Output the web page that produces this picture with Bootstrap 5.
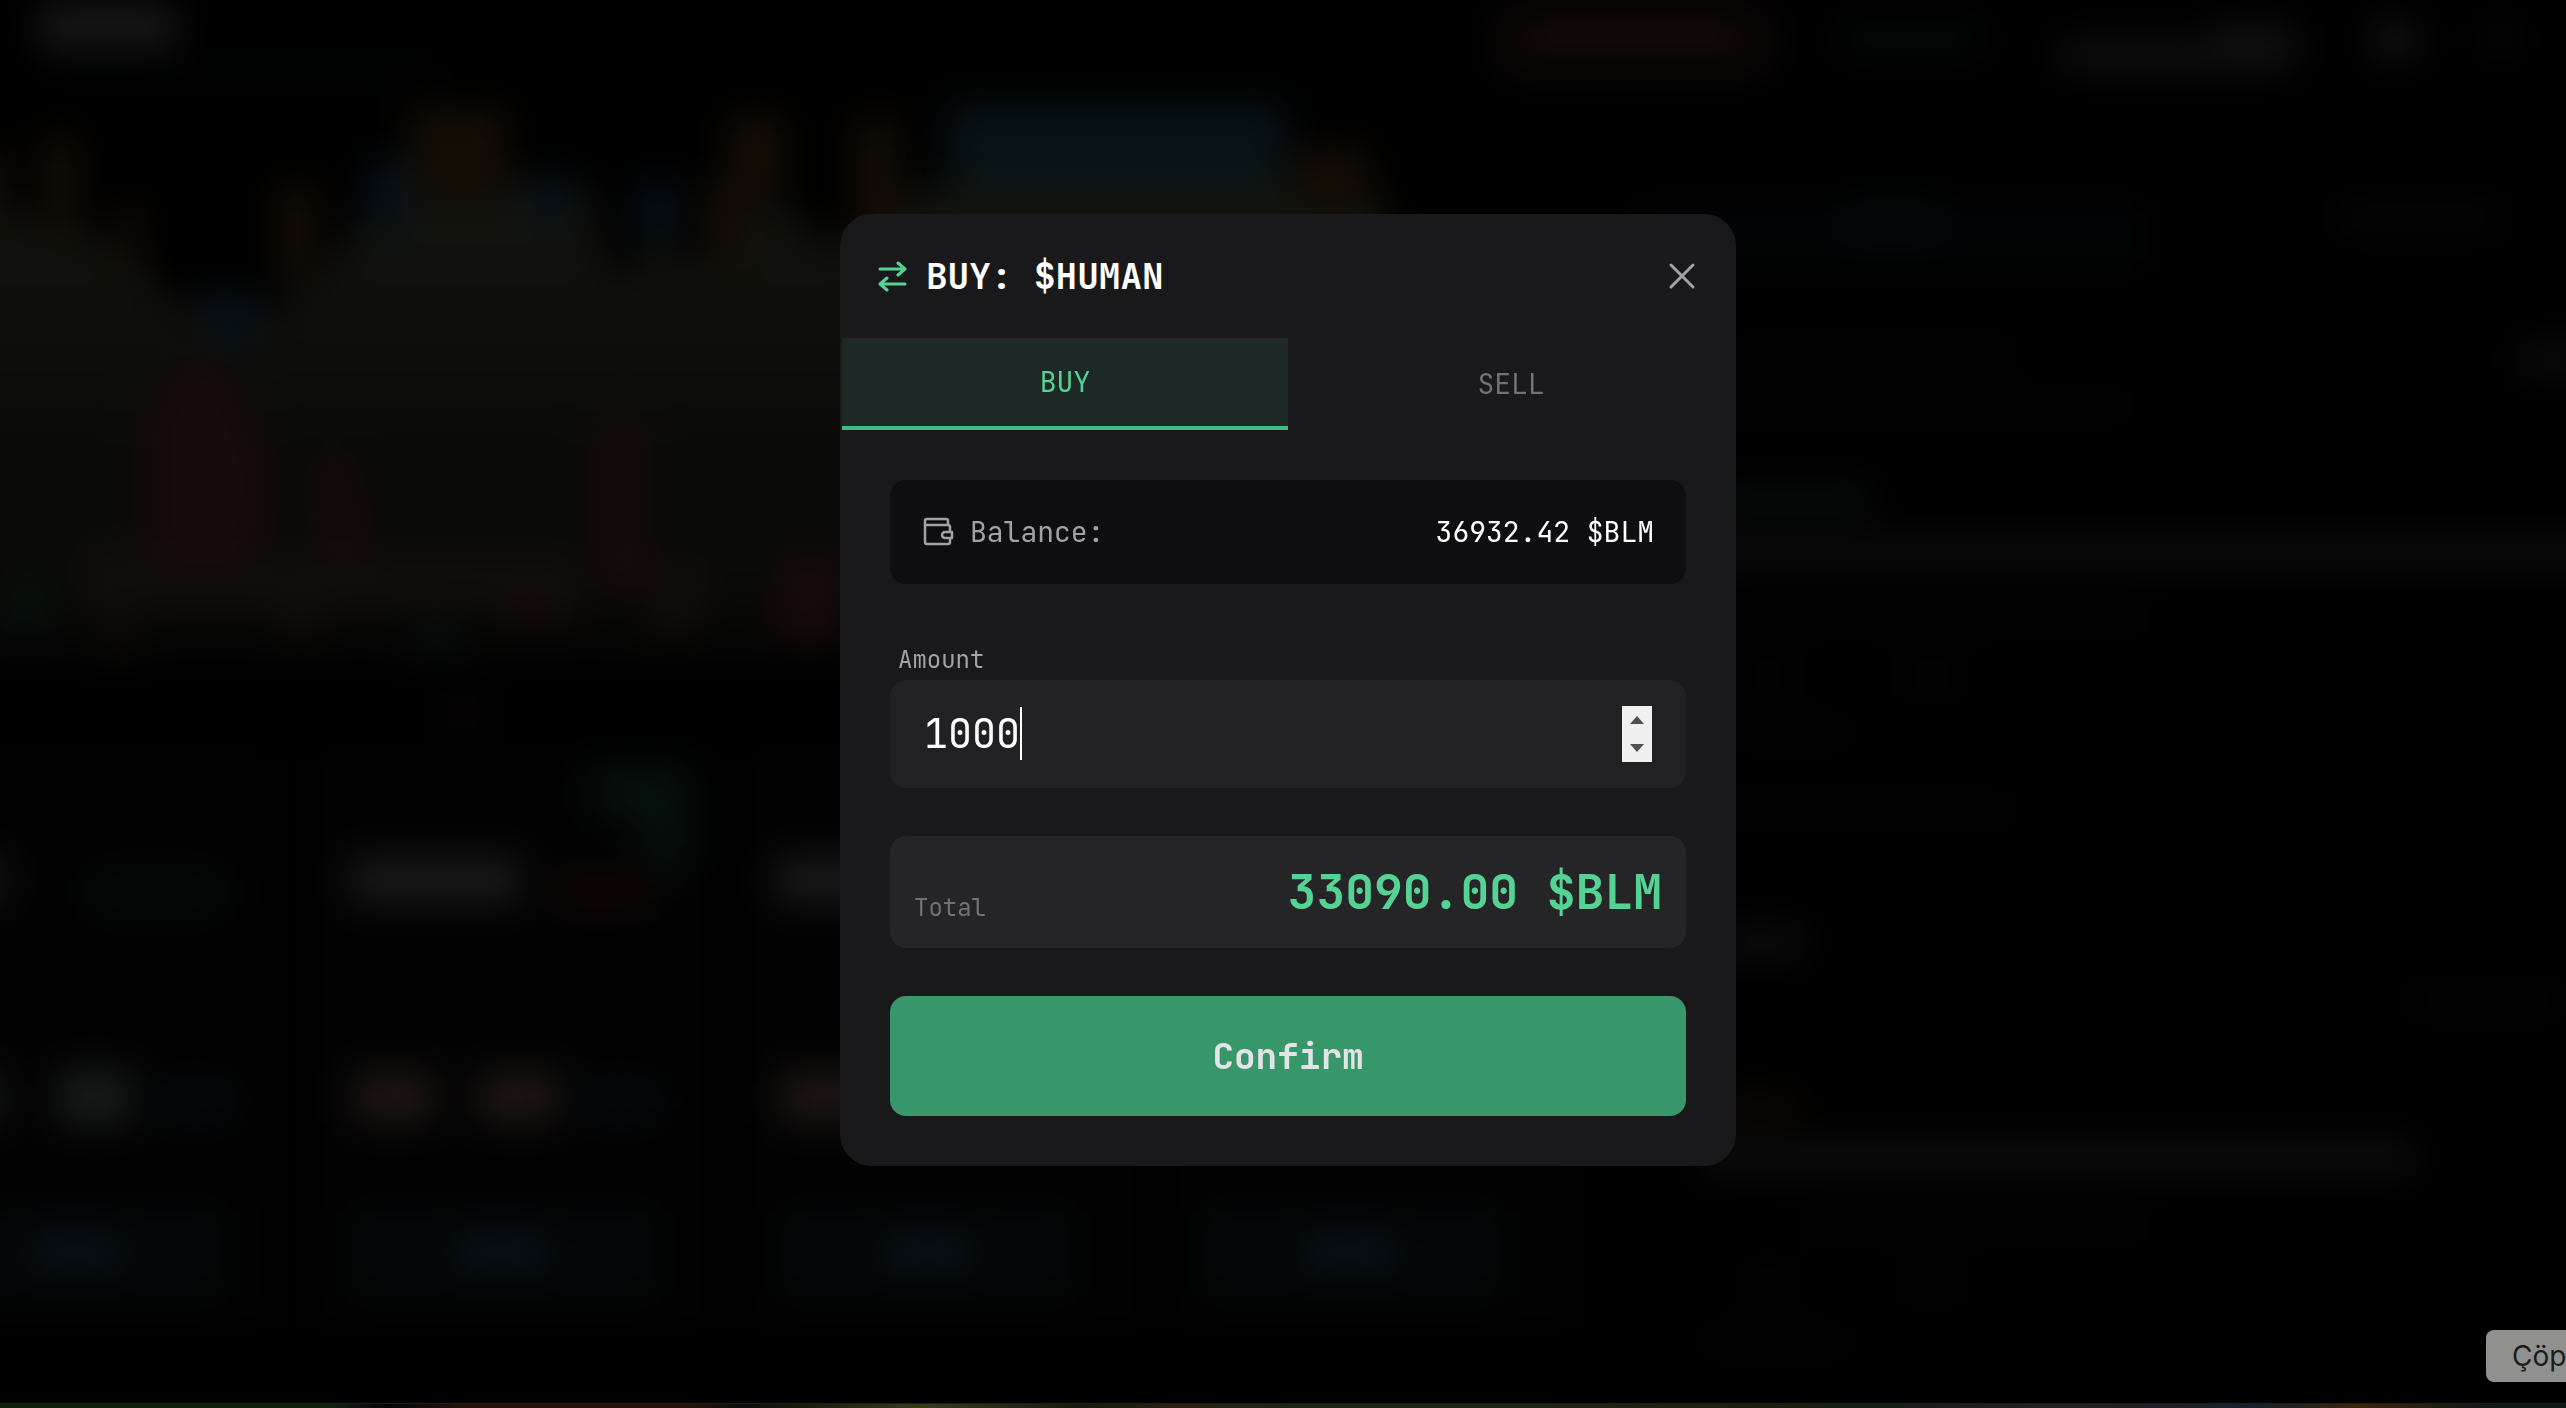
<!DOCTYPE html>
<html lang="en" data-bs-theme="dark">
<head>
<meta charset="utf-8">
<meta name="viewport" content="width=device-width, initial-scale=1">
<title>BUY: $HUMAN</title>
<link href="https://cdn.jsdelivr.net/npm/bootstrap@5.3.0/dist/css/bootstrap.min.css" rel="stylesheet">
<style>
  :root {
    --green: #55d394;
    --line: #44bc81;
    --muted: #a1a1aa;
    --faint: #71717a;
  }
  body {
    background: #000;
    color: #fff;
    font-family: "JetBrains Mono", "DejaVu Sans Mono", monospace;
    font-size: 28px;
    line-height: 40px;
    overflow: hidden;
  }
  .scene { z-index: 0; }
  .trade-modal {
    --bs-modal-width: 896px;
    padding: 0 0 28px 10px;
  }
  .trade-modal .modal-content {
    background: #19191b;
    border: 2px solid #19191b;
    border-radius: 32px;
    color: #fff;
  }
  .trade-head { padding: 32px 32px 34px 34px; height: 122px; }
  .head-group { gap: 18px; }
  .trade-title { font-size: 36px; line-height: 56px; font-weight: 600; }
  .icon-box { width: 32px; height: 32px; flex: none; }
  .close-btn { background: none; border: 0; padding: 4px; line-height: 0; color: var(--muted); }
  .trade-tabs { border-bottom: 2px solid transparent; }
  .trade-tabs .nav-link {
    height: 92px;
    border: 0;
    border-radius: 0;
    padding: 0;
    background: none;
    color: var(--faint);
  }
  .trade-tabs .nav-link.active {
    background: #1e2827;
    color: var(--green);
    border-bottom: 4px solid var(--line);
  }
  .trade-body { padding: 48px; gap: 48px; }
  .balance-box { background: #0e0e10; border-radius: 16px; padding: 32px; }
  .balance-name { color: var(--muted); }
  .amount-label { color: var(--muted); font-size: 24px; line-height: 40px; padding: 8px 8px 0; }
  .amount-box { background: #212123; border-radius: 16px; padding: 24px 34px; height: 108px; }
  .amount-box input {
    background: none;
    border: 0;
    outline: 0;
    padding: 0;
    color: #fff;
    caret-color: transparent;
    font-size: 40px;
    line-height: 60px;
    appearance: textfield;
  }
  .amount-box input::-webkit-inner-spin-button { display: none; }
  .amount-field { font-size: 40px; }
  .caret { left: 4ch; top: 3px; width: 2px; height: 53px; background: #fff; }
  .spinner { width: 30px; background: #f0f0f0; }
  .spinner button { border: 0; padding: 0; height: 28px; background: none; line-height: 0; color: #505050; }
  .total-box { background: #252528; border-radius: 16px; padding: 24px; }
  .total-name { color: var(--faint); font-size: 24px; line-height: 32px; }
  .total-value { color: var(--green); font-size: 48px; line-height: 64px; font-weight: 600; }
  .confirm-btn {
    --bs-btn-bg: #37976a;
    --bs-btn-hover-bg: #37976a;
    --bs-btn-color: #e4e4e7;
    --bs-btn-border-color: transparent;
    --bs-btn-border-radius: 16px;
    --bs-btn-font-size: 36px;
    --bs-btn-font-weight: 600;
    height: 120px;
  }
  .dock-tip {
    z-index: 1060;
    right: 0;
    bottom: 26px;
    width: 80px;
    height: 52px;
    padding-left: 26px;
    border-radius: 8px 0 0 8px;
    background: #90908e;
    color: #1c1c1c;
    font-family: Inter, sans-serif;
    font-size: 28px;
    line-height: 52px;
    white-space: nowrap;
    overflow: hidden;
  }
  .wallpaper {
    height: 5px;
    border-top: 1px solid #1c1c1c;
    background: linear-gradient(90deg, #10200f 0 13%, #050505 15%, #24130b 18% 27%, #0c0c08 29%, #3a3a18 36%, #141a0e 42%, #2c2110 46%, #1b2612 50% 60%, #20200f 66%, #141f12 72%, #222 80%, #17202a 88%, #3a2408 92%, #101818 97%);
  }
</style>
</head>
<body>

<!-- Dimmed dashboard behind the dialog -->
<svg class="scene position-fixed top-0 start-0 w-100 h-100" viewBox="0 0 1568 860" preserveAspectRatio="xMidYMid slice" aria-hidden="true">
  <defs>
    <filter id="soft" x="-40" y="-40" width="1648" height="940" filterUnits="userSpaceOnUse" color-interpolation-filters="sRGB"><feGaussianBlur stdDeviation="11"/></filter>
    <linearGradient id="area" x1="0" y1="60" x2="0" y2="420" gradientUnits="userSpaceOnUse">
      <stop offset="0" stop-color="#14150f"/><stop offset=".3" stop-color="#10110c"/>
      <stop offset=".6" stop-color="#0a0a08"/><stop offset=".8" stop-color="#0a0a08"/><stop offset="1" stop-color="#010101"/>
    </linearGradient>
  </defs>
  <rect width="1568" height="860" fill="#000"/>
  <g filter="url(#soft)">
    <!-- header -->
    <rect x="24" y="2" width="84" height="28" fill="#161616"/>
    <rect x="30" y="36" width="240" height="14" fill="#010203"/>
    <rect x="910" y="0" width="176" height="50" rx="14" fill="#080404"/>
    <rect x="930" y="15" width="135" height="16" fill="#140b0a"/>
    <rect x="1122" y="12" width="90" height="22" rx="8" fill="#030705"/>
    <rect x="1258" y="25" width="144" height="18" fill="#0f0f0f"/>
    <rect x="1350" y="14" width="52" height="24" fill="#0f0f0f"/>
    <rect x="1450" y="12" width="26" height="24" fill="#111"/>
    <rect x="1518" y="14" width="18" height="18" fill="#090909"/>
    <!-- chart area -->
    <path fill="url(#area)" d="M-30 125 50 140 90 165 105 185 150 178 165 192 200 165 225 125 290 108 358 112 374 170 400 150 430 162 470 120 500 145 530 150 560 115 830 105 848 130 848 408H-30Z"/>
    <g fill="#130d05">
      <path d="M-30 92h34v40h-34zM26 82h22v60H26zM72 125h14v40H72zM170 112h24v60h-24zM250 66h60v56h-60zM445 70h34v50h-34zM430 110h28v50h-28zM522 72h28v80h-28zM790 90h46v40h-46z"/>
    </g>
    <g fill="#061118">
      <path d="M226 98h24v46h-24zM322 108h28v28h-28zM390 112h24v36h-24zM126 178h30v34h-30z"/>
      <path fill="#081317" d="M580 64H784v50H580z"/>
    </g>
    <g fill="#180b0b">
      <path d="M92 250l30-30 18 10 24 60-10 60H92zM194 280h18l12 80h-22zM370 255h20v85l30 20h-50zM302 340l20 10 30 30h-45zM482 340h30v50h-40z"/>
      <path fill="#110e0a" d="M60 330h20l-4 70h-10zM170 340h28v45h-28zM400 355l30-12v34l-30 16zM50 340h300l10 30H50z"/>
    </g>
    <path fill="#06110c" d="M4 355h26v30H4zM255 382h24v16h-24z"/>
    <path fill="#0a0605" d="M272 425h24v20h-24z"/>
    <!-- market cards -->
    <g fill="#020202">
      <rect x="-90" y="462" width="255" height="350"/><rect x="190" y="462" width="245" height="350"/>
      <rect x="455" y="462" width="245" height="350"/><rect x="715" y="462" width="245" height="350"/>
    </g>
    <g fill="#030607">
      <rect x="-60" y="740" width="196" height="52"/><rect x="216" y="740" width="184" height="52"/>
      <rect x="478" y="740" width="176" height="52"/><rect x="736" y="740" width="180" height="52"/>
    </g>
    <g fill="#081318">
      <rect x="20" y="755" width="54" height="20"/><rect x="280" y="755" width="54" height="20"/>
      <rect x="540" y="755" width="54" height="20"/><rect x="798" y="755" width="54" height="20"/>
    </g>
    <g fill="#191919">
      <rect x="-20" y="524" width="22" height="26"/><rect x="214" y="524" width="104" height="27"/><rect x="474" y="524" width="80" height="27"/>
    </g>
    <rect x="58" y="536" width="76" height="18" fill="#040b08"/>
    <rect x="340" y="536" width="58" height="18" fill="#130606"/>
    <path fill="#05100d" d="M362 468h58v64h-24l-4-28-28-10z"/>
    <path fill="#181b1a" d="M-20 654H0v32h-20zM36 654h44v32H36z"/>
    <path fill="#1b1513" d="M216 654h50v32h-50zM292 654h50v32h-50zM476 654h70v32h-70z"/>
    <path fill="#040c11" d="M98 665h42v16H98zM358 665h42v16h-42z"/>
    <!-- news panel -->
    <rect x="1000" y="122" width="312" height="44" fill="#020304"/>
    <rect x="1130" y="127" width="52" height="14" fill="#050c0d"/>
    <rect x="1428" y="127" width="100" height="12" fill="#080808"/>
    <path fill="#040404" d="M1060 211h170v10h-170zM1040 243h260v10h-260zM1060 372h250v10h-250zM1060 405h40v14h-40zM1158 405h44v14h-44zM1060 442h70v10h-70zM1040 490h190v10h-190zM1470 605h98v12h-98zM1100 743h210v10h-210zM1062 776h36v14h-36zM1160 776h40v14h-40zM1040 814h90v10h-90z"/>
    <rect x="1540" y="210" width="40" height="18" fill="#0d0d0d"/>
    <rect x="1050" y="296" width="92" height="18" fill="#050c08"/>
    <rect x="1030" y="328" width="560" height="18" fill="#0c0c0c"/>
    <rect x="1050" y="566" width="52" height="20" fill="#0c0c0c"/>
    <rect x="1050" y="668" width="48" height="16" fill="#0c0903"/>
    <rect x="1040" y="697" width="434" height="20" fill="#0d0d0d"/>
  </g>
</svg>

<main class="modal trade-modal show d-block" tabindex="-1" role="dialog" aria-labelledby="tradeTitle">
  <div class="modal-dialog modal-dialog-centered">
    <div class="modal-content">
      <header class="trade-head d-flex align-items-center justify-content-between">
        <div class="head-group d-flex align-items-center">
          <svg class="icon-box" viewBox="0 0 32 32" fill="none" stroke="#55d394" stroke-width="3" stroke-linecap="round" stroke-linejoin="round" aria-hidden="true">
            <path d="M4 9H29M22 3l7 6-7 6M29 24H4M11 18l-7 6 7 6"/>
          </svg>
          <h1 class="trade-title mb-0" id="tradeTitle">BUY: $HUMAN</h1>
        </div>
        <button class="close-btn" type="button" aria-label="Close">
          <svg width="32" height="32" viewBox="0 0 32 32" fill="none" stroke="currentColor" stroke-width="3" stroke-linecap="round" aria-hidden="true"><path d="M5 5l22 22M27 5L5 27"/></svg>
        </button>
      </header>

      <div class="nav nav-justified trade-tabs" role="tablist">
        <button class="nav-link nav-item active" type="button" role="tab" aria-selected="true">BUY</button>
        <button class="nav-link nav-item" type="button" role="tab" aria-selected="false">SELL</button>
      </div>

      <form class="trade-body d-flex flex-column">
        <div class="balance-box d-flex align-items-center justify-content-between">
          <div class="balance-name d-flex align-items-center gap-3">
            <svg class="icon-box" viewBox="0 0 32 32" fill="none" stroke="currentColor" stroke-width="2.500" stroke-linejoin="round" stroke-linecap="round" aria-hidden="true">
              <path d="M26 9V5a2 2 0 0 0-2-2H5a2 2 0 0 0-2 2v21a2 2 0 0 0 2 2h21a2 2 0 0 0 2-2v-3M4 9H26a2 2 0 0 1 2 2v4M30 16h-7a3 3 0 0 0 0 6h7z"/>
            </svg>
            <span>Balance:</span>
          </div>
          <span>36932.42 $BLM</span>
        </div>

        <div class="d-flex flex-column">
          <label class="amount-label" for="amount">Amount</label>
          <div class="amount-box d-flex align-items-center">
            <div class="amount-field position-relative flex-grow-1">
              <input class="w-100 d-block" id="amount" type="number" value="1000">
              <span class="caret position-absolute"></span>
            </div>
            <div class="spinner d-flex flex-column">
              <button type="button" aria-label="Increase"><svg width="14" height="8" viewBox="0 0 14 8" aria-hidden="true"><path d="M0 8 7 0l7 8z" fill="currentColor"/></svg></button>
              <button type="button" aria-label="Decrease"><svg width="14" height="8" viewBox="0 0 14 8" aria-hidden="true"><path d="M0 0 7 8l7-8z" fill="currentColor"/></svg></button>
            </div>
          </div>
        </div>

        <div class="total-box d-flex align-items-end justify-content-between">
          <span class="total-name">Total</span>
          <span class="total-value">33090.00 $BLM</span>
        </div>

        <button class="btn confirm-btn w-100" type="button">Confirm</button>
      </form>
    </div>
  </div>
</main>

<div class="dock-tip position-fixed" role="tooltip">Çöp</div>
<div class="wallpaper position-fixed bottom-0 start-0 w-100"></div>

<script src="https://cdn.jsdelivr.net/npm/bootstrap@5.3.0/dist/js/bootstrap.bundle.min.js"></script>
</body>
</html>
